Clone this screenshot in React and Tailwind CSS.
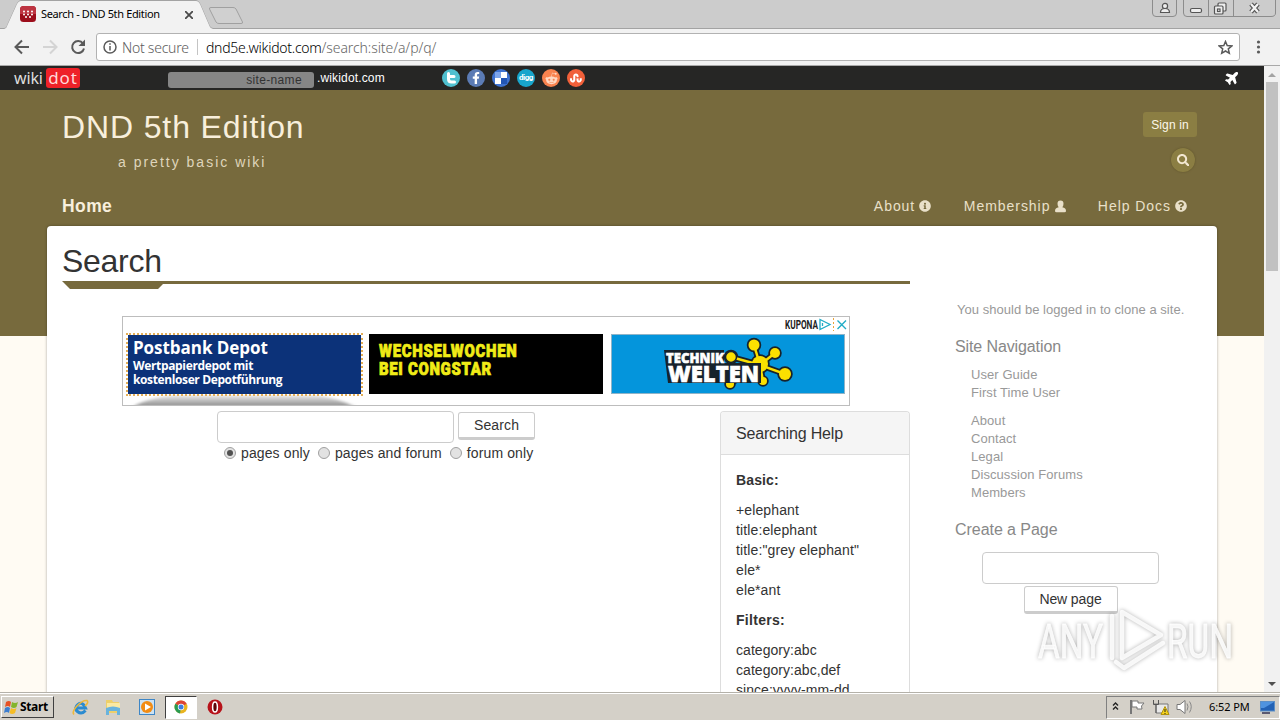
import { FaInfoCircle, FaQuestionCircle, FaSearch, FaPlane, FaFacebookF, FaRedditAlien, FaStumbleupon } from 'react-icons/fa';

const helpBasic = ['+elephant', 'title:elephant', 'title:"grey elephant"', 'ele*', 'ele*ant'];
const helpFilters = ['category:abc', 'category:abc,def', 'since:yyyy-mm-dd'];

function TabStrip() {
  return (
    <div className="relative h-[29px] shrink-0 bg-[#cccccc]">
      <svg className="absolute inset-0" width="1280" height="29" fill="none">
        <path d="M0 28.5H4C7 28.5 7 26 8 24L17 4Q18.500 .5 21 .5H196Q198.500 .5 200 4L209 25Q210 28.500 213 28.500H1280" stroke="#a3a3a3" />
        <path d="M4 29C7 28.500 7 26 8 24L17 4Q18.500 1 21 1H196Q198.500 1 200 4L209 25Q210 28.500 213 29Z" fill="#f2f2f2" />
        <path d="M211 7.500H233Q235 7.500 236 9L242.500 22Q243 23.500 241 23.500H219Q217 23.500 216 22L209.500 9Q209 7.500 211 7.500Z" fill="#d0d0d0" stroke="#a0a0a0" />
      </svg>
      <div className="relative flex h-[28px] items-center pl-5">
        <svg width="16" height="16" viewBox="0 0 16 16">
          <rect width="16" height="16" rx="3.500" fill="#9c0d1b" />
          <path d="M0 8V3.500Q0 0 3.500 0H12.500Q16 0 16 3.500V8Z" fill="#bd3441" />
          <g fill="#fff">
            <circle cx="4" cy="5.500" r="1" /><circle cx="8" cy="5.500" r="1" /><circle cx="12" cy="5.500" r="1" />
            <circle cx="4" cy="8.500" r="1" /><circle cx="8" cy="8.500" r="1" /><circle cx="12" cy="8.500" r="1" />
            <circle cx="6" cy="11" r="1" /><circle cx="10" cy="11" r="1" />
          </g>
        </svg>
        <span className="ml-[5px] w-[142px] whitespace-nowrap font-['Noto_Sans'] text-[11px] tracking-[-0.36px] text-black">Search - DND 5th Edition</span>
        <svg className="ml-[2px] mt-[2px]" width="8" height="8" stroke="#4a4a4a" strokeWidth="1.800"><path d="M0 0L8 8M8 0L0 8" /></svg>
      </div>
      <svg className="absolute right-0 top-0" width="130" height="18" fill="none" stroke="#8c8c8c">
        <path d="M2.500 0V13Q2.500 16.500 6 16.500H23Q26.500 16.500 26.500 13V0M33.500 0V13Q33.500 16.500 37 16.500H121Q125.500 16.500 125.500 13V0M58.500 0V16M83.500 0V16" />
        <g stroke="#555" strokeWidth="1.200" fill="#eee">
          <circle cx="15" cy="6" r="2.600" /><path d="M10.500 12.500Q10.500 8.500 15 8.500T19.500 12.500Z" />
          <rect x="40.500" y="8.500" width="11" height="4" rx="1.500" />
          <rect x="68" y="3" width="8" height="8" rx="1" /><rect x="64.500" y="6" width="8.500" height="8" rx="1" /><rect x="67.500" y="9" width="2.500" height="2.500" />
        </g>
        <path d="M101 4L108 12M108 4L101 12" stroke="#555" strokeWidth="4.500" />
        <path d="M101 4L108 12M108 4L101 12" stroke="#f4f4f4" strokeWidth="2.200" />
      </svg>
    </div>
  );
}

function Toolbar() {
  return (
    <div className="flex h-[37px] shrink-0 items-center border-b border-[#a9a9a9] bg-[#f2f2f2] font-['Noto_Sans']">
      <svg width="96" height="36" fill="none" strokeWidth="2">
        <path d="M29 18H16M22 11.500L15.500 18L22 24.500" stroke="#5a5a5a" />
        <path d="M43 18H56M50 11.500L56.500 18L50 24.500" stroke="#d4d4d4" />
        <path d="M83 14.500A6 6 0 1 0 84 19.500" stroke="#5a5a5a" />
        <path d="M85 10.500V17H78.500Z" fill="#5a5a5a" />
      </svg>
      <div className="flex h-[28px] w-[1144px] items-center rounded-[3px] border border-[#b2b2b2] bg-white text-[14px]">
        <svg className="ml-[6px]" width="14" height="14" fill="none" stroke="#5a5a5a" strokeWidth="1.500">
          <circle cx="7" cy="7" r="6" /><path d="M7 6V10.500M7 3.300V4.800" />
        </svg>
        <span className="ml-[5px] w-[75px] whitespace-nowrap font-light tracking-[-0.25px] text-[#5c5c5c]">Not secure</span>
        <span className="h-4 w-px bg-[#c4c4c4]" />
        <span className="ml-[8px] grow whitespace-nowrap font-light text-[#666]">
          <span className="tracking-[-0.28px] text-black">dnd5e.wikidot.com</span><span className="tracking-[-0.08px]">/search:site/a/p/q/</span>
        </span>
        <svg className="mr-[6px]" width="15" height="15" viewBox="0 0 15 15" fill="none" stroke="#5a5a5a" strokeWidth="1.500">
          <path d="M7.500 1.500L9.200 5.600L13.700 6L10.300 8.900L11.300 13.300L7.500 11L3.700 13.300L4.700 8.900L1.300 6L5.800 5.600Z" />
        </svg>
      </div>
      <svg className="ml-[16px]" width="5" height="16" fill="#5a5a5a">
        <circle cx="2.500" cy="3" r="1.600" /><circle cx="2.500" cy="8" r="1.600" /><circle cx="2.500" cy="13" r="1.600" />
      </svg>
    </div>
  );
}

function WikidotBar() {
  return (
    <div className="flex h-6 items-center bg-[#262625]">
      <span className="ml-[14px] w-[32px] font-['Noto_Sans'] text-[16px] leading-6 tracking-[-0.15px] text-[#ddd]">wiki</span>
      <span className="h-[20px] w-[34px] rounded-[3px] bg-[#ee2128] text-center font-['Noto_Sans'] text-[17px] leading-[19px] tracking-[0.9px] text-[#ffd9da]">dot</span>
      <span className="ml-[88px] mt-[3px] h-[16px] w-[146px] rounded-[3px] bg-[#868686] pr-[12px] text-right text-[12px] leading-[16px] tracking-[0.35px] text-[#333]">site-name</span>
      <span className="ml-[3px] w-[125px] text-[12px] tracking-[0.15px] text-white">.wikidot.com</span>
      <div className="flex gap-[7px] text-white">
        <span className="flex size-[18px] items-center justify-center rounded-full bg-[#50c0d0]">
          <svg width="12" height="14" fill="none" stroke="#fff" strokeWidth="3" strokeLinecap="round" strokeLinejoin="round"><path d="M3.500 2.500V8Q3.500 11 6.500 11H9.500M3.500 5.500H9" /></svg>
        </span>
        <span className="flex size-[18px] items-center justify-center rounded-full bg-[#5b7bb5]"><FaFacebookF size={12} /></span>
        <span className="flex size-[18px] items-center justify-center rounded-full bg-[#3f73d1]">
          <svg width="12" height="12"><path d="M0 0H6V6H0Z" fill="#7ea5ea" /><path d="M6 0H12V6H6ZM0 6H6V12H0Z" fill="#fff" /><path d="M6 6H12V12H6Z" fill="#2255b5" /></svg>
        </span>
        <span className="flex size-[18px] items-center justify-center rounded-full bg-[#18a5cc] font-['Roboto'] text-[8px] font-bold leading-none tracking-[-0.5px]">digg</span>
        <span className="flex size-[18px] items-center justify-center rounded-full bg-[#f9834f] text-[#ffd9c4]"><FaRedditAlien size={13} /></span>
        <span className="flex size-[18px] items-center justify-center rounded-full bg-[#f1603a]"><FaStumbleupon size={12} /></span>
      </div>
      <FaPlane className="mb-[2px] ml-auto mr-[24px] -rotate-45 text-white" size={15} />
    </div>
  );
}

function SiteHeader() {
  return (
    <header className="flex h-[136px] justify-between pl-[62px] pr-[67px] text-[#f8efdc]">
      <div className="whitespace-nowrap">
        <h1 className="mt-[21px] h-8 text-[32px] leading-8 tracking-[0.87px]">DND 5th Edition</h1>
        <p className="mt-[9px] pl-[56px] text-[14px] leading-5 tracking-[2px] text-[#dfd5bb]">a pretty basic wiki</p>
        <p className="mt-[24px] text-[17.500px] font-bold leading-5 tracking-[0.4px]">Home</p>
      </div>
      <div className="flex flex-col items-end">
        <button className="mt-[22px] h-[25px] w-[54px] rounded-[3px] bg-[#8b7e43] text-[12px] tracking-[0.15px] text-[#fdf8ea]">Sign in</button>
        <span className="mt-[11px] mr-[2px] flex size-[24px] items-center justify-center rounded-full bg-[#8b7e43] text-[#f3e8d2] shadow-[0_0_2px_#5c5129]"><FaSearch size={12.5} /></span>
        <nav className="mr-[10px] mt-[24px] flex whitespace-nowrap text-[14px] leading-5 tracking-[0.95px] text-[#e9e0c9]">
          <span className="flex w-[90px] items-center gap-1">About <FaInfoCircle size={12} /></span>
          <span className="flex w-[134px] items-center gap-1">
            Membership
            <svg width="13" height="13" fill="currentColor"><path d="M6.500 .5Q9.500 .5 9.500 3.800Q9.500 6 8.300 7.200Q12 7.800 12 11Q12 12.300 10.500 12.300H2.500Q1 12.300 1 11Q1 7.800 4.700 7.200Q3.500 6 3.500 3.800Q3.500 .5 6.500 .5Z" /></svg>
          </span>
          <span className="flex items-center gap-1">Help Docs <FaQuestionCircle size={12} /></span>
        </nav>
      </div>
    </header>
  );
}

function TechnikLogo() {
  const dots = [[142, 10, 5.500], [163, 18, 5], [173, 39, 6], [119, 22, 5.500], [151, 46, 4], [118, 49, 4]];
  return (
    <svg width="232" height="58" fontFamily="Open Sans, sans-serif" fontWeight="800">
      <g stroke="#17232c" strokeWidth="6">
        {dots.map(([x, y]) => <path key={x} d={`M148 30L${x} ${y}`} />)}
        {dots.map(([x, y, r]) => <circle key={x} cx={x} cy={y} r={r} strokeWidth="3.500" />)}
        <circle cx="148" cy="29" r="8" strokeWidth="3.500" />
      </g>
      <g stroke="#fbe000" strokeWidth="2.500" fill="#fbe000">
        {dots.map(([x, y]) => <path key={x} d={`M148 30L${x} ${y}`} />)}
        {dots.map(([x, y, r]) => <circle key={x} cx={x} cy={y} r={r} stroke="none" />)}
        <circle cx="148" cy="29" r="8" stroke="none" />
      </g>
      <path d="M52 15H112V28H149V48H56Z" fill="#17232c" />
      <g fill="#fff" stroke="#fff" strokeWidth=".6">
        <text x="54" y="27.500" fontSize="14.500" textLength="58" lengthAdjust="spacingAndGlyphs">TECHNIK</text>
        <text x="56" y="46.500" fontSize="22.500" textLength="91" lengthAdjust="spacingAndGlyphs">WELTEN</text>
      </g>
      <circle cx="119" cy="22" r="5.500" fill="#fbe000" stroke="#17232c" strokeWidth="1.500" />
    </svg>
  );
}

function AdBanner() {
  return (
    <div className="ml-[60px] h-[90px] w-[728px] border border-[#bdbdbd] bg-white">
      <div className="flex h-[16px] items-center justify-end pr-px">
        <svg width="64" height="16">
          <text x="1" y="12" fontSize="12" fontWeight="700" fontFamily="Roboto, sans-serif" textLength="33" lengthAdjust="spacingAndGlyphs" fill="#222">KUPONA</text>
          <path d="M36 2.500L46 7.500L36 12.500ZM38.500 6V9" fill="none" stroke="#20acc6" strokeWidth="1.300" />
          <path d="M49.500 1V14" stroke="#e9a43a" strokeDasharray="2 2" />
          <path d="M53.500 3.500L62 12M62 3.500L53.500 12" stroke="#20acc6" strokeWidth="1.400" />
        </svg>
      </div>
      <div className="flex">
        <div className="relative ml-[2px] h-[72px] w-[238px]">
          <svg className="absolute left-0 top-[62px]" width="238" height="10">
            <defs>
              <linearGradient id="fade" x1="0" y1="0" x2="0" y2="1"><stop offset="0" stopColor="#eee" /><stop offset="1" stopColor="#858585" /></linearGradient>
              <filter id="soft"><feGaussianBlur stdDeviation="1.500" /></filter>
            </defs>
            <path d="M8 12Q20 4 50 0H190Q215 4 230 12Z" fill="url(#fade)" filter="url(#soft)" />
          </svg>
          <div className="relative ml-px h-[63px] whitespace-nowrap border-2 border-dotted border-[#e3ae58] bg-[#0c3279] bg-clip-padding pl-[5px] font-['Open_Sans'] font-bold text-white">
            <p className="mt-[3px] text-[17px] leading-[20px] tracking-[-0.05px]">Postbank Depot</p>
            <p className="mt-px text-[12px] leading-[13px] tracking-[-0.35px]">Wertpapierdepot mit</p>
            <p className="mt-px text-[12px] leading-[13px] tracking-[-0.38px]">kostenloser Depotführung</p>
          </div>
        </div>
        <div className="ml-[6px] mt-px h-[60px] w-[234px] bg-black">
          <svg width="234" height="60" fill="#f0ec17" stroke="#f0ec17" strokeWidth=".7" fontFamily="Roboto, sans-serif" fontWeight="900" fontSize="17.500">
            <text transform="translate(10 23) scale(.85 1)" textLength="162" lengthAdjust="spacing">WECHSELWOCHEN</text>
            <text transform="translate(10 41) scale(.85 1)" textLength="132" lengthAdjust="spacing">BEI CONGSTAR</text>
          </svg>
        </div>
        <div className="ml-[8px] mt-px h-[60px] w-[234px] border border-[#8fb4c8] bg-[#0495dc]">
          <TechnikLogo />
        </div>
      </div>
    </div>
  );
}

function Radio({ label, checked }) {
  return (
    <span className="flex items-center gap-[5px]">
      <span className="flex size-[12px] items-center justify-center rounded-full border border-[#a0a0a0] bg-[#e2e2e2]">
        {checked && <span className="size-[6px] rounded-full bg-[#505050]" />}
      </span>
      {label}
    </span>
  );
}

function SearchArea() {
  return (
    <div className="mt-[5px] flex justify-between">
      <div className="ml-[155px] whitespace-nowrap text-[14px] tracking-[0.12px] text-[#333]">
        <div className="flex gap-1">
          <div className="h-[32px] w-[237px] rounded-[4px] border border-[#ccc] bg-white" />
          <button className="mt-px h-[28px] w-[77px] rounded-[3px] border border-b-[3px] border-[#ccc] bg-white leading-[22px]">Search</button>
        </div>
        <div className="ml-[7px] flex h-[20px] items-center gap-[8px]">
          <Radio label="pages only" checked />
          <Radio label="pages and forum" />
          <Radio label="forum only" />
        </div>
      </div>
      <div className="h-[281px] w-[190px] overflow-hidden rounded-t-[4px] border border-b-0 border-[#ddd] text-[14px] leading-5 tracking-[0.12px] text-[#333]">
        <h2 className="h-[43px] border-b border-[#ddd] bg-[#f5f5f5] pl-[15px] text-[16px] leading-[43px] tracking-[-0.18px]">Searching Help</h2>
        <div className="whitespace-nowrap pl-[15px]">
          <p className="mt-[15px] font-bold">Basic:</p>
          <div className="mt-[10px]">{helpBasic.map((t) => <p key={t}>{t}</p>)}</div>
          <p className="mt-[10px] font-bold tracking-[0.3px]">Filters:</p>
          <div className="mt-[10px] tracking-[0.05px]">{helpFilters.map((t) => <p key={t}>{t}</p>)}</div>
        </div>
      </div>
    </div>
  );
}

function Sidebar() {
  return (
    <aside className="ml-[45px] whitespace-nowrap text-[13px] leading-[18px] tracking-[0.07px] text-[#999]">
      <p className="ml-[2px] mt-[75px] tracking-[0.04px]">You should be logged in to clone a site.</p>
      <h3 className="mt-[18px] text-[16px] leading-5 tracking-[-0.11px] text-[#888]">Site Navigation</h3>
      <div className="ml-4 mt-[9px]">
        <p>User Guide</p>
        <p>First Time User</p>
      </div>
      <div className="ml-4 mt-[10px]">
        <p>About</p>
        <p>Contact</p>
        <p>Legal</p>
        <p>Discussion Forums</p>
        <p>Members</p>
      </div>
      <h3 className="mt-[18px] text-[16px] leading-5 tracking-[-0.05px] text-[#888]">Create a Page</h3>
      <div className="ml-[27px] mt-[12px] flex w-[177px] flex-col items-center">
        <div className="h-[32px] w-full rounded-[4px] border border-[#ccc]" />
        <button className="mt-[2px] h-[28px] w-[94px] rounded-[3px] border border-b-[3px] border-[#ccc] bg-white text-[14px] leading-[22px] tracking-[-0.1px] text-[#333]">New page</button>
      </div>
    </aside>
  );
}

function Page() {
  return (
    <div className="w-[1264px] overflow-hidden bg-[#fffbf3]">
      <WikidotBar />
      <div className="bg-[linear-gradient(#776a3d_246px,#fffbf3_246px)]">
        <SiteHeader />
        <div className="ml-[47px] flex h-[480px] w-[1170px] rounded-t-[4px] bg-white pl-[15px] shadow-[0_0_3px_rgba(0,0,0,0.35)]">
          <main className="w-[848px]">
            <h1 className="mt-[15px] h-10 text-[32px] leading-10 tracking-[-0.28px] text-[#333]">Search</h1>
            <svg className="block" width="848" height="8" fill="#776a3d"><path d="M0 0H848V3H101L96 8H8Z" /></svg>
            <div className="h-[27px]" />
            <AdBanner />
            <SearchArea />
          </main>
          <Sidebar />
        </div>
      </div>
    </div>
  );
}

function Scrollbar() {
  return (
    <div className="flex w-4 flex-col items-center bg-[#f1f1f1]">
      <svg className="shrink-0" width="16" height="16"><path d="M4 11L8 7L12 11Z" fill="#a3a3a3" /></svg>
      <div className="h-[189px] w-[12px] bg-[#c1c1c1]" />
      <svg className="mt-auto shrink-0" width="16" height="16"><path d="M4 6L8 10L12 6Z" fill="#505050" /></svg>
    </div>
  );
}

function Watermark() {
  return (
    <svg className="absolute left-[1030px] top-[604px] drop-shadow-[0_0_2px_rgba(0,0,0,0.35)]" width="210" height="74" fill="none" stroke="#fff" strokeOpacity=".85" strokeLinejoin="round" strokeLinecap="round">
      <g fill="#fff" strokeWidth=".8" fontFamily="Roboto, sans-serif" fontSize="48" fillOpacity=".85">
        <text x="8" y="54" textLength="65" lengthAdjust="spacingAndGlyphs">ANY</text>
        <text x="137" y="54" textLength="66" lengthAdjust="spacingAndGlyphs">RUN</text>
      </g>
      <path d="M82 12V54M92 54V8L131 31L92 54M86 58L94 64L133 39" strokeWidth="4.500" />
    </svg>
  );
}

function TaskIcons() {
  return (
    <>
      <svg className="ml-[18px]" width="17" height="17" viewBox="0 0 17 17" fill="none">
        <path d="M13.500 11.500Q9.500 16 5.500 12.500T6 5.500T13.500 9H5" stroke="#2b8bd0" strokeWidth="3" />
        <path d="M2 15.500Q-.5 13 5 7T15 1.500Q17 3.500 13 7" stroke="#edb83b" strokeWidth="1.600" />
      </svg>
      <svg className="ml-[16px]" width="16" height="16">
        <path d="M1 1H7L8 3H14V14H1Z" fill="#edcf6a" /><path d="M2 4H15V9H2Z" fill="#fae9a2" /><path d="M1 9Q8 6 15 9V16H12V12H4V16H1Z" fill="#68b3dd" />
      </svg>
      <svg className="ml-[18px]" width="16" height="16">
        <rect x=".5" y=".5" width="15" height="15" fill="#cce2f3" stroke="#3e86c6" /><circle cx="8" cy="8" r="6" fill="#f28c14" /><path d="M6 4.500L12 8L6 11.500Z" fill="#fff" />
      </svg>
      <span className="ml-[10px] flex h-[23px] w-[32px] items-center justify-center border border-b-white border-l-[#404040] border-r-white border-t-[#404040] bg-white">
        <svg width="14" height="14" viewBox="0 0 14 14">
          <circle cx="7" cy="7" r="6.500" fill="#e9b41f" /><path d="M7 7L1.300 3.800A6.500 6.500 0 0 1 12.700 3.800Z" fill="#dc4436" /><path d="M7 7L1.300 3.800A6.500 6.500 0 0 0 6 13.400Z" fill="#299b52" />
          <circle cx="7" cy="7" r="3.200" fill="#fff" /><circle cx="7" cy="7" r="2.500" fill="#3c7de0" />
        </svg>
      </span>
      <svg className="ml-[10px]" width="16" height="16">
        <circle cx="8" cy="8" r="7.500" fill="#b7121a" /><ellipse cx="8" cy="8" rx="2.400" ry="5" fill="#5e0508" stroke="#fff" strokeWidth="1.500" />
      </svg>
    </>
  );
}

function Taskbar() {
  return (
    <div className="flex h-[28px] shrink-0 items-center border-t border-[#b4b1a9] bg-[#d4d0c8] pt-px font-['Noto_Sans'] shadow-[inset_0_1px_0_#fff]">
      <button className="ml-px flex h-[22px] w-[53px] items-center border border-b-[#404040] border-l-white border-r-[#404040] border-t-white pl-[2px] text-[12px] font-bold tracking-[-0.35px] text-black">
        <svg className="mr-px shrink-0" width="15" height="15">
          <path d="M2 2Q5 0 7 2L6 7Q4 5 1 7Z" fill="#e75225" /><path d="M8 2Q11 4 14 2L12.500 7Q10 9 7 7Z" fill="#84b52d" />
          <path d="M1 8Q4 6 6 8L5 13Q3 11 0 13Z" fill="#3c7ed0" /><path d="M7 8Q10 10 12.500 8L11 13Q8 15 5.500 13Z" fill="#f6bd25" />
        </svg>
        Start
      </button>
      <TaskIcons />
      <div className="ml-auto flex h-[23px] w-[174px] items-center border border-b-white border-l-[#808080] border-r-white border-t-[#808080]">
        <svg width="102" height="21" fill="none" stroke="#222">
          <path d="M6 8.500L8.500 6L11 8.500M6 12.500L8.500 10L11 12.500" strokeWidth="1.400" />
          <path d="M24 3V17" stroke="#777" strokeWidth="2" /><path d="M25 4H31V6H37L34.500 9L35 12H30V10H25Z" fill="#fff" stroke="#777" />
          <path d="M47 7H61V16H49V7" fill="#e8e8e8" stroke="#777" /><path d="M46.500 3V7.500H51.500V3M49 7V16" stroke="#555" /><path d="M54 17.500L58 9.500L62 17.500Z" fill="#f5d31c" stroke="#b3930b" /><path d="M58 12V15M58 16V17" />
          <path d="M70 7.500H73L78 3.500V16.500L73 12.500H70Z" fill="#fff" stroke="#777" /><path d="M80 6.500Q82 9.500 80 13.500M82.500 4.500Q86 9.500 82.500 15.500" stroke="#888" />
        </svg>
        <span className="w-[50px] whitespace-nowrap text-[11px] tracking-[-0.1px] text-black">6:52 PM</span>
        <svg width="18" height="16"><rect x="1.500" y="2.500" width="14" height="9.500" fill="#2362b5" stroke="#5c8fc6" /><path d="M2 3H15L5 9H2Z" fill="#4f93df" /><path d="M3 14H11" stroke="#335" strokeWidth="1.500" /></svg>
      </div>
    </div>
  );
}

export default function App() {
  return (
    <div className="relative flex h-[720px] w-[1280px] flex-col overflow-hidden font-['Liberation_Sans',sans-serif]">
      <TabStrip />
      <Toolbar />
      <div className="flex h-[626px] shrink-0 overflow-hidden">
        <Page />
        <Scrollbar />
      </div>
      <Taskbar />
      <Watermark />
    </div>
  );
}
